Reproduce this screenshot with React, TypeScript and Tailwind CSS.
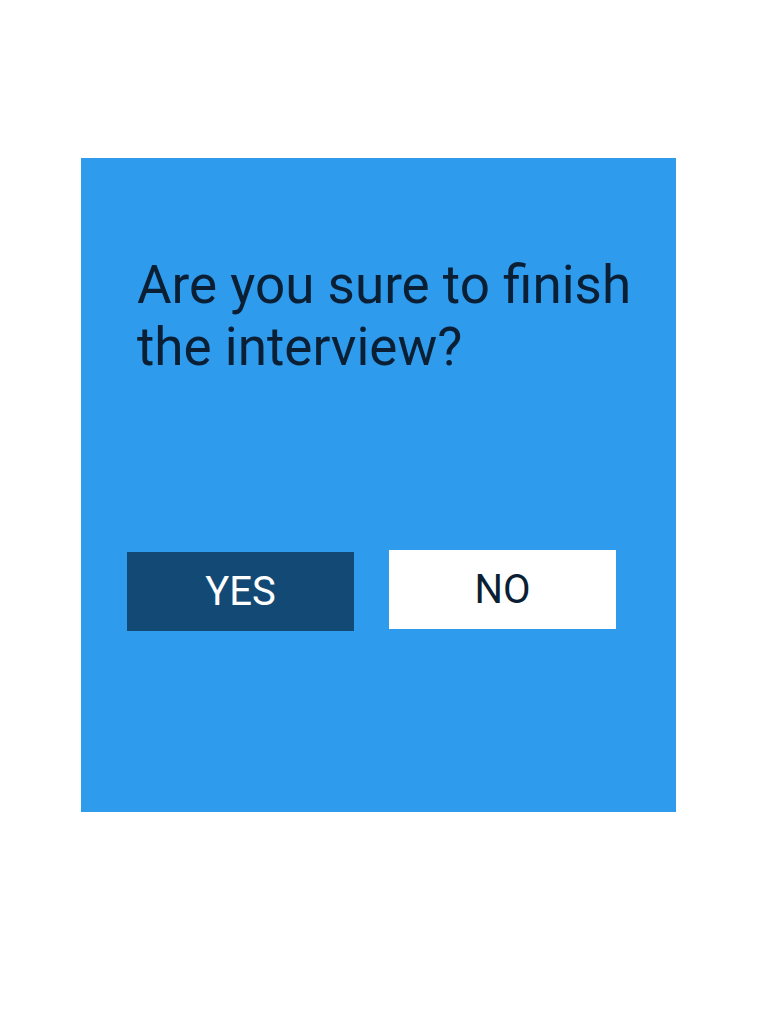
export default function App() {
    return (
        <div className="min-h-screen w-[768px] h-[1024px] bg-white pt-[158px] pl-[81px]" style={{ fontFamily: "Roboto, sans-serif" }}>
            <div className="w-[595px] h-[654px] bg-[#2f9bed] flex flex-col pt-[96px]">
                <h1 className="pl-[56px] whitespace-nowrap text-[53px] leading-[62px] font-normal text-[#0a1f33]">
                    Are you sure to finish
                    <br />
                    the interview?
                </h1>

                <div className="flex items-start pl-[46px] gap-[35px] mt-[172px]">
                    <button className="mt-[2px] w-[227px] h-[79px] bg-[#134a75] text-white text-[40px] leading-none">
                        YES
                    </button>
                    <button className="w-[227px] h-[79px] bg-white text-[#0a1f33] text-[40px] leading-none">
                        NO
                    </button>
                </div>
            </div>
        </div>
    );
}
